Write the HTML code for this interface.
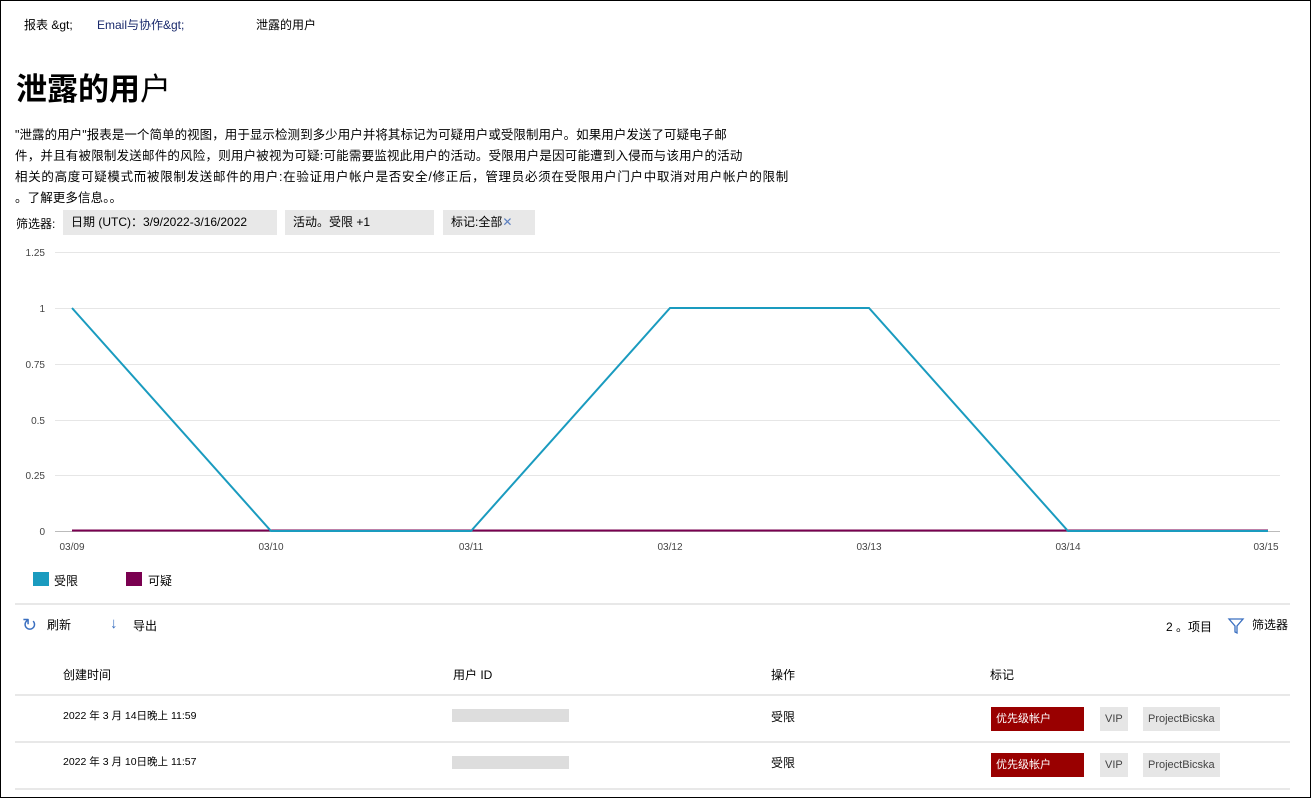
<!DOCTYPE html>
<html><head><meta charset="utf-8"><style>
*{margin:0;padding:0;box-sizing:border-box}
body{width:1311px;height:798px;background:#fff;font-family:"Liberation Sans","Noto Sans CJK SC",sans-serif;color:#000;position:relative;overflow:hidden}
.frame{position:absolute;left:0;top:0;width:1311px;height:798px;border:1px solid #000}
.a{position:absolute;white-space:nowrap}
.f{background:#e8e8e8;height:25px;top:210px;font-size:12px;line-height:25px;padding-left:8px}
.tag{position:absolute;height:24px;font-size:11px;line-height:24px;padding:0 5px}
.red{background:#990000;color:#fff;width:93px}
.gray{background:#e6e6e6;color:#444}
.hr{position:absolute;left:15px;width:1275px;height:2px;background:#e8e8e8}
</style></head><body>
<div class="frame"></div>
<div class="a" style="left:24px;top:16px;font-size:12px">报表 &amp;gt;</div>
<div class="a" style="left:97px;top:16px;font-size:12px;color:#1a2a6c">Email与协作&amp;gt;</div>
<div class="a" style="left:256px;top:16px;font-size:12px">泄露的用户</div>
<div class="a" style="left:16px;top:64px;font-size:31px;font-weight:bold;letter-spacing:0">泄露的用<span style="font-weight:normal">户</span></div>
<div class="a" style="left:15px;top:125px;font-size:12.5px;line-height:21px;white-space:nowrap;letter-spacing:0.1px">
<div style="letter-spacing:0.05px">"泄露的用户"报表是一个简单的视图，用于显示检测到多少用户并将其标记为可疑用户或受限制用户。如果用户发送了可疑电子邮</div><div style="letter-spacing:0.2px">件，并且有被限制发送邮件的风险，则用户被视为可疑:可能需要监视此用户的活动。受限用户是因可能遭到入侵而与该用户的活动</div><div style="letter-spacing:0.7px">相关的高度可疑模式而被限制发送邮件的用户:在验证用户帐户是否安全/修正后，管理员必须在受限用户门户中取消对用户帐户的限制</div><div>。了解更多信息。。</div></div>
<div class="a" style="left:16px;top:215px;font-size:12px">筛选器:</div>
<div class="a f" style="left:63px;width:214px">日期 (UTC)：3/9/2022-3/16/2022</div>
<div class="a f" style="left:285px;width:149px">活动。受限 +1</div>
<div class="a f" style="left:443px;width:92px">标记:全部<span style="color:#5b7fc0">✕</span></div>
<svg class="a" style="left:0;top:240px" width="1311" height="320">
<g stroke="#e6e6e6" stroke-width="1">
<line x1="55" x2="1280" y1="12.5" y2="12.5"/><line x1="55" x2="1280" y1="68.5" y2="68.5"/><line x1="55" x2="1280" y1="124.5" y2="124.5"/><line x1="55" x2="1280" y1="180.5" y2="180.5"/><line x1="55" x2="1280" y1="235.5" y2="235.5"/></g>
<line x1="55" x2="1280" y1="291.5" y2="291.5" stroke="#bbb"/>
<g font-size="10" fill="#444" text-anchor="end" font-family="Liberation Sans">
<text x="45" y="16">1.25</text><text x="45" y="72">1</text><text x="45" y="128">0.75</text><text x="45" y="184">0.5</text><text x="45" y="239">0.25</text><text x="45" y="295">0</text></g>
<g font-size="10" fill="#444" text-anchor="middle" font-family="Liberation Sans">
<text x="72" y="310">03/09</text><text x="271" y="310">03/10</text><text x="471" y="310">03/11</text><text x="670" y="310">03/12</text><text x="869" y="310">03/13</text><text x="1068" y="310">03/14</text><text x="1266" y="310">03/15</text></g>
<line x1="72" x2="1268" y1="290.5" y2="290.5" stroke="#7a0050" stroke-width="2"/>
<polyline points="72,68 271,291 471,291 670,68 869,68 1068,291 1268,291" fill="none" stroke="#1a9bbf" stroke-width="2"/>
</svg>
<div class="a" style="left:33px;top:572px;width:16px;height:14px;background:#1a9bbf"></div>
<div class="a" style="left:54px;top:572px;font-size:12px">受限</div>
<div class="a" style="left:126px;top:572px;width:16px;height:14px;background:#7a0050"></div>
<div class="a" style="left:148px;top:572px;font-size:12px">可疑</div>
<div class="hr" style="top:603px"></div>
<div class="a" style="left:22px;top:615px;font-size:18px;color:#3a6fc0">↻</div>
<div class="a" style="left:47px;top:616px;font-size:12px">刷新</div>
<div class="a" style="left:110px;top:615px;font-size:15px;color:#3a6fc0">↓</div>
<div class="a" style="left:133px;top:617px;font-size:12px">导出</div>
<div class="a" style="left:1166px;top:618px;font-size:12px">2 。项目</div>
<svg class="a" style="left:1227px;top:617px" width="18" height="18"><path d="M2 2 H16 L10 9 V16 L8 15 V9 Z" fill="none" stroke="#3a6fc0" stroke-width="1.3"/></svg>
<div class="a" style="left:1252px;top:616px;font-size:12px">筛选器</div>
<div class="a" style="left:63px;top:666px;font-size:12px">创建时间</div>
<div class="a" style="left:453px;top:666px;font-size:12px">用户 ID</div>
<div class="a" style="left:771px;top:666px;font-size:12px">操作</div>
<div class="a" style="left:990px;top:666px;font-size:12px">标记</div>
<div class="hr" style="top:694px"></div>
<div class="a" style="left:63px;top:708px;font-size:10.5px">2022 年 3 月 14日晚上 11:59</div>
<div class="a" style="left:452px;top:709px;width:117px;height:13px;background:#ddd"></div>
<div class="a" style="left:771px;top:708px;font-size:12px">受限</div>
<div class="tag red" style="left:991px;top:707px">优先级帐户</div>
<div class="tag gray" style="left:1100px;top:707px">VIP</div>
<div class="tag gray" style="left:1143px;top:707px">ProjectBicska</div>
<div class="hr" style="top:741px"></div>
<div class="a" style="left:63px;top:754px;font-size:10.5px">2022 年 3 月 10日晚上 11:57</div>
<div class="a" style="left:452px;top:756px;width:117px;height:13px;background:#ddd"></div>
<div class="a" style="left:771px;top:754px;font-size:12px">受限</div>
<div class="tag red" style="left:991px;top:753px">优先级帐户</div>
<div class="tag gray" style="left:1100px;top:753px">VIP</div>
<div class="tag gray" style="left:1143px;top:753px">ProjectBicska</div>
<div class="hr" style="top:788px"></div>
</body></html>
